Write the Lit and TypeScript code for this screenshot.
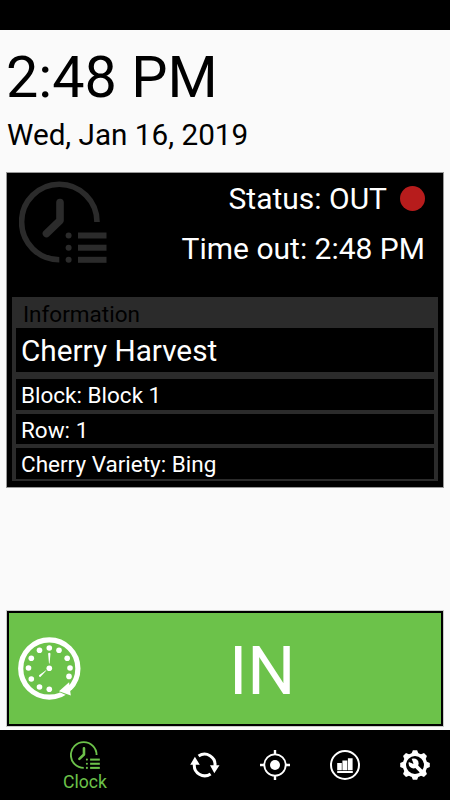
import { LitElement, html, css, svg } from "lit";
import { customElement } from "lit/decorators.js";

const DETAILS = ["Block: Block 1", "Row: 1", "Cherry Variety: Bing"];

// Clock face with a list in its lower right corner, on an 88 x 82 grid.
const clockList = (cls: string) => html`
  <svg class=${cls} viewBox="0 0 88 82" fill="none" stroke="currentColor">
    <path d="M78 41A37.7 37.7 0 1 0 40.3 78.7" stroke-width="5.6" />
    <path d="M41 21.5V39.5L27.5 52.5" stroke-width="7.6" stroke-linecap="round" stroke-linejoin="round" />
    ${[54.5, 66.7, 78.8].map(
      (y) => svg`<circle cx="49.6" cy=${y} r="3" fill="currentColor" stroke="none" />
        <path d="M59 ${y}H87.5" stroke-width="6" />`
    )}
  </svg>
`;

const FACE_DOTS = [
  [31.3, 11], [41, 13.3], [49.2, 21.3], [52, 31], [51, 39.4],
  [31.3, 52.3], [21.5, 50], [13.3, 42], [10.5, 31], [13.3, 21.3], [21.5, 13.3],
];

const punchClock = html`
  <svg class="punch" viewBox="0 0 64 64" fill="#fff">
    <circle cx="31.3" cy="31.5" r="28.6" fill="none" stroke="#fff" stroke-width="5.2" />
    <path d="M40.5 54.8L50.3 59L50 62H57L58 54L56 52L52 54Z" fill="#6cc24a" />
    <path d="M51.1 45.3L52.8 58.6L41 54.2Z" />
    ${FACE_DOTS.map(([x, y]) => svg`<circle cx=${x} cy=${y} r="2.8" />`)}
    <circle cx="31.3" cy="31.3" r="2.8" />
    <path d="M30.1 16.5Q31.3 15 32.5 16.5L31.6 26.5H31ZM28.4 33.5L22.3 40Q20.7 40.2 21 38.2L28 33.2Z" />
  </svg>
`;

const sync = html`
  <svg class="icon" viewBox="0 0 30 30" fill="#fff">
    <path d="M8.6 6.1A10.4 10.4 0 0 1 24.9 16M20.6 23.9A10.4 10.4 0 0 1 4.4 14" fill="none" stroke="#fff" stroke-width="3" />
    <path d="M20 15.3H29.5L24.3 23.3ZM.2 14.8L4.9 6.8L9.8 14.8Z" />
  </svg>
`;

const target = html`
  <svg class="icon" viewBox="0 0 30 30" fill="none" stroke="#fff">
    <circle cx="15" cy="15" r="10.7" stroke-width="1.8" />
    <circle cx="15" cy="15" r="5" fill="#fff" stroke="none" />
    <path d="M15 0V5M15 25V30M0 15H5M25 15H30" stroke-width="2.4" />
  </svg>
`;

const chart = html`
  <svg class="icon" viewBox="0 0 30 30" fill="#fff">
    <circle cx="15" cy="15" r="14" fill="none" stroke="#fff" stroke-width="2" />
    <path d="M7.2 13H11.8V20.3H7.2ZM12.4 10.6H17.3V20.3H12.4ZM17.9 8.2H22.6V20.3H17.9ZM7.2 21H22.8V23H7.2Z" />
  </svg>
`;

const gearTeeth = [0, 45, 90, 135, 180, 225, 270, 315];

const settings = html`
  <svg class="icon" viewBox="0 0 30 30" fill="#fff">
    <circle cx="15" cy="15" r="10.6" fill="none" stroke="#fff" stroke-width="3.2" />
    ${gearTeeth.map(
      (a) => svg`<path d="M11 4.8L12.9 .2H17.1L19 4.8Z" transform="rotate(${a} 15 15)" />`
    )}
    <path d="M14.5 14.5L23.3 23.3" stroke="#fff" stroke-width="3.8" />
    <circle cx="13.6" cy="13.4" r="5" />
    <path d="M13.6 14L7.6 11.4L11.2 7.4Z" fill="#000" />
  </svg>
`;

@customElement("app-root")
export class AppRoot extends LitElement {
  static styles = css`
    :host {
      display: flex;
      flex-direction: column;
      box-sizing: border-box;
      width: 450px;
      height: 800px;
      border-top: 30px solid #000;
      background: #fafafa;
      color: #000;
      font-family: Roboto, sans-serif;
      overflow: hidden;
      white-space: nowrap;
    }
    * {
      box-sizing: border-box;
    }
    svg {
      display: block;
      flex: none;
    }
    .time {
      padding: 17px 0 0 6px;
      height: 86px;
      font-size: 57.5px;
      line-height: 62px;
    }
    .date {
      padding-left: 7px;
      height: 56px;
      font-size: 29.7px;
      line-height: 38px;
    }
    .card {
      margin: 0 6px;
      height: 316px;
      padding: 0 5px;
      border: 1px solid #999;
      background: #000;
      color: #fff;
    }
    .summary {
      display: flex;
      justify-content: space-between;
      height: 124px;
      padding: 8px 13px 0 6.7px;
    }
    .emblem {
      width: 88px;
      height: 82px;
      margin-top: -0.5px;
      color: #2b2b2b;
    }
    .status {
      display: flex;
      flex-direction: column;
      align-items: flex-end;
      font-size: 30px;
    }
    .line {
      display: flex;
      align-items: center;
      gap: 13px;
      height: 34px;
      margin-bottom: 16px;
    }
    .dot {
      width: 25px;
      height: 25px;
      border-radius: 50%;
      background: #b71c1c;
    }
    .panel {
      height: 184px;
      padding: 0 4px;
      background: #2b2b2b;
      font-size: 22.5px;
    }
    .heading {
      height: 31px;
      padding-left: 7px;
      color: #000;
      line-height: 34px;
    }
    .job {
      height: 44px;
      margin-bottom: 7px;
      padding-left: 5px;
      background: #000;
      font-size: 29.75px;
      line-height: 46px;
    }
    .details {
      display: flex;
      flex-direction: column;
      gap: 4px;
    }
    .detail {
      height: 30.5px;
      padding-left: 5px;
      background: #000;
      line-height: 33.5px;
    }
    .punch-in {
      display: flex;
      align-items: center;
      height: 115px;
      margin: auto 7px 4px;
      padding-left: 9.5px;
      border: 2px solid #000;
      outline: 1px solid #c9cbc8;
      background: #6cc24a;
      color: #fff;
    }
    .punch {
      width: 64px;
      height: 64px;
      margin: 0 0.5px 0 -0.5px;
    }
    .label {
      flex: 1;
      padding: 4px 0 0 1px;
      text-align: center;
      font-size: 67.5px;
    }
    .nav {
      display: flex;
      height: 70px;
      background: #000;
    }
    .tab {
      display: flex;
      flex: none;
      width: 70px;
      align-items: center;
      justify-content: center;
    }
    .tab.active {
      flex-direction: column;
      justify-content: flex-start;
      width: 170px;
      padding-top: 10.5px;
      color: #6cc24a;
      font-size: 17.6px;
      line-height: 26px;
    }
    .mini {
      width: 30px;
      height: 28px;
    }
    .icon {
      width: 30px;
      height: 30px;
    }
  `;

  render() {
    return html`
      <div class="time">2:48 PM</div>
      <div class="date">Wed, Jan 16, 2019</div>
      <section class="card">
        <div class="summary">
          ${clockList("emblem")}
          <div class="status">
            <div class="line">Status: OUT <span class="dot"></span></div>
            <div class="line">Time out: 2:48 PM</div>
          </div>
        </div>
        <div class="panel">
          <div class="heading">Information</div>
          <div class="job">Cherry Harvest</div>
          <div class="details">
            ${DETAILS.map((d) => html`<div class="detail">${d}</div>`)}
          </div>
        </div>
      </section>
      <div class="punch-in">
        ${punchClock}
        <div class="label">IN</div>
      </div>
      <nav class="nav">
        <div class="tab active">${clockList("mini")}<span>Clock</span></div>
        <div class="tab">${sync}</div>
        <div class="tab">${target}</div>
        <div class="tab">${chart}</div>
        <div class="tab">${settings}</div>
      </nav>
    `;
  }
}
